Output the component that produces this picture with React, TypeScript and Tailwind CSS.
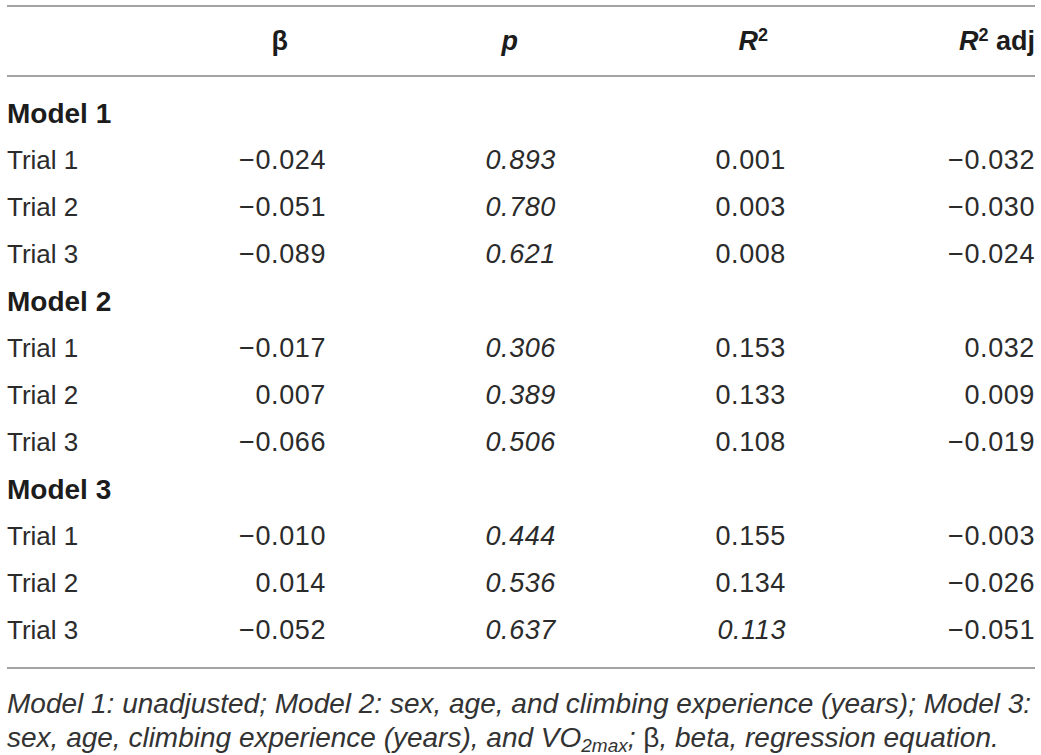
import React from "react";

type Row = { label: string; beta: string; p: string; r2: string; adj: string; r2Italic?: boolean };

const groups: { title: string; rows: Row[] }[] = [
  {
    title: "Model 1",
    rows: [
      { label: "Trial 1", beta: "\u22120.024", p: "0.893", r2: "0.001", adj: "\u22120.032" },
      { label: "Trial 2", beta: "\u22120.051", p: "0.780", r2: "0.003", adj: "\u22120.030" },
      { label: "Trial 3", beta: "\u22120.089", p: "0.621", r2: "0.008", adj: "\u22120.024" },
    ],
  },
  {
    title: "Model 2",
    rows: [
      { label: "Trial 1", beta: "\u22120.017", p: "0.306", r2: "0.153", adj: "0.032" },
      { label: "Trial 2", beta: "0.007", p: "0.389", r2: "0.133", adj: "0.009" },
      { label: "Trial 3", beta: "\u22120.066", p: "0.506", r2: "0.108", adj: "\u22120.019" },
    ],
  },
  {
    title: "Model 3",
    rows: [
      { label: "Trial 1", beta: "\u22120.010", p: "0.444", r2: "0.155", adj: "\u22120.003" },
      { label: "Trial 2", beta: "0.014", p: "0.536", r2: "0.134", adj: "\u22120.026" },
      { label: "Trial 3", beta: "\u22120.052", p: "0.637", r2: "0.113", adj: "\u22120.051", r2Italic: true },
    ],
  },
];

// label | beta | p | R2 | R2 adj  (cells right-aligned to column edge)
const cols = "grid grid-cols-[223px_96px_230px_230px_1fr] items-center";

export default function App() {
  return (
    <div
      className="min-h-screen bg-white px-[7px] pt-[5px] text-[26px] text-[#2b2b2b]"
      style={{ fontFamily: '"Liberation Sans", Arial, sans-serif' }}
    >
      <div className="w-[1028px]">
        {/* Header */}
        <div className={`${cols} h-[72px] border-y-2 border-[#a3a3a3] font-bold text-[27px] text-[#1c1c1c]`}>
          <div />
          <div className="text-right pr-[38px]">β</div>
          <div className="text-right pr-[38px] italic">p</div>
          <div className="text-right pr-[18px]">
            <span className="italic">R</span>
            <sup className="text-[18px] not-italic">2</sup>
          </div>
          <div className="text-right">
            <span className="italic">R</span>
            <sup className="text-[18px]">2</sup> adj
          </div>
        </div>

        {/* Body */}
        <div className="py-[13px] border-b-2 border-[#a3a3a3]">
          {groups.map((g) => (
            <div key={g.title}>
              <div className="h-[47px] flex items-center font-bold text-[28px] text-[#1c1c1c]">{g.title}</div>
              {g.rows.map((r, i) => (
                <div key={i} className={`${cols} h-[47px]`}>
                  <div>{r.label}</div>
                  <div className="text-right text-[27px] tracking-[0.6px]">{r.beta}</div>
                  <div className="text-right text-[27px] tracking-[0.6px] italic">{r.p}</div>
                  <div className={`text-right text-[27px] tracking-[0.6px] ${r.r2Italic ? "italic" : ""}`}>{r.r2}</div>
                  <div className="text-right text-[27px] tracking-[0.6px]">{r.adj}</div>
                </div>
              ))}
            </div>
          ))}
        </div>

        {/* Footnote */}
        <p className="pt-[18px] text-[28px] leading-[34px] italic text-[#333] whitespace-nowrap">
          Model 1: unadjusted; Model 2: sex, age, and climbing experience (years); Model 3:
          <br />
          sex, age, climbing experience (years), and VO
          <sub className="text-[19px]">2max</sub>; <span className="not-italic">β</span>, beta, regression equation.
        </p>
      </div>
    </div>
  );
}
